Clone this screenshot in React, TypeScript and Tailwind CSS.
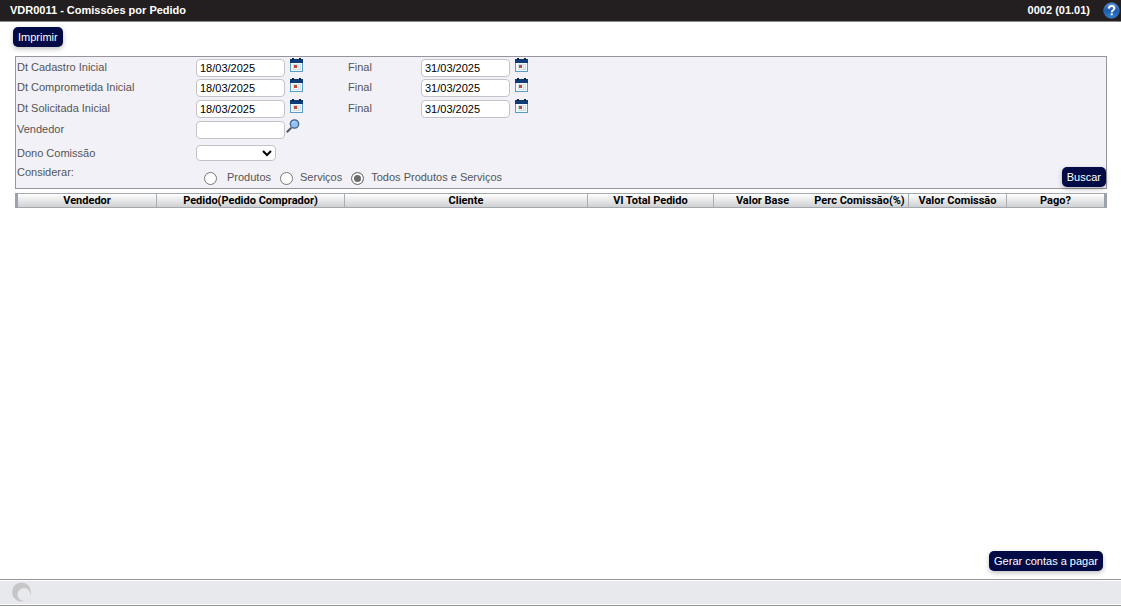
import { useState } from "react";

const dateRows = [
  { id: "cadastro", label: "Dt Cadastro Inicial" },
  { id: "comprometida", label: "Dt Comprometida Inicial" },
  { id: "solicitada", label: "Dt Solicitada Inicial" },
];

const columns = [
  { name: "Vendedor", width: "w-[139px]", divider: true },
  { name: "Pedido(Pedido Comprador)", width: "w-[188px]", divider: true },
  { name: "Cliente", width: "w-auto", divider: true },
  { name: "Vl Total Pedido", width: "w-[126px]", divider: true },
  { name: "Valor Base", width: "w-[97px]", divider: false },
  { name: "Perc Comissão(%)", width: "w-[98px]", divider: true },
  { name: "Valor Comissão", width: "w-[98px]", divider: true },
  { name: "Pago?", width: "w-[97px]", divider: false },
];

const options = ["Produtos", "Serviços", "Todos Produtos e Serviços"];

const field =
  "h-[18px] w-[89px] rounded border border-[#c4c4c8] bg-white px-[3px] text-[11px] text-black outline-none";
const action =
  "h-5 rounded-[5px] bg-[#020b45] px-[5px] text-[11px] leading-5 text-white whitespace-nowrap shadow-[0_2px_5px_rgba(0,0,0,0.25)]";

function CalendarIcon() {
  return (
    <svg width="13" height="14" viewBox="0 0 13 14" aria-hidden="true">
      <rect x="0.5" y="2.5" width="12" height="11" fill="#f4fafd" stroke="#5b9bc8" />
      <rect x="0" y="1" width="13" height="4" fill="#0d3c78" />
      <rect x="2" y="0" width="2" height="2" fill="#10243f" />
      <rect x="9" y="0" width="2" height="2" fill="#10243f" />
      <path d="M3 6.500h8M3 9h8M3 11.500h8M3.500 6v6M8.500 6v6M10.500 6v6" stroke="#cfe2ea" />
      <rect x="4" y="7" width="3" height="3" fill="#c64a3c" />
    </svg>
  );
}

function SearchIcon() {
  return (
    <svg width="14" height="14" viewBox="0 0 14 14" aria-hidden="true">
      <path d="M0.800 13.200L5.300 8.700" stroke="#555b63" strokeWidth="2" />
      <circle cx="8.500" cy="5" r="4.200" fill="#8fc1f3" stroke="#46618c" strokeWidth="1.300" />
      <path d="M6 4.500a2.700 2.700 0 0 1 3-2" fill="none" stroke="#c4e0fb" />
    </svg>
  );
}

function HelpIcon() {
  return (
    <svg width="17" height="17" viewBox="0 0 17 17" aria-hidden="true">
      <defs>
        <linearGradient id="help" x1="0" y1="0" x2="0" y2="1">
          <stop offset="0" stopColor="#5d94d6" />
          <stop offset="0.5" stopColor="#1e5cad" />
          <stop offset="1" stopColor="#2f7fd3" />
        </linearGradient>
      </defs>
      <circle cx="8.500" cy="8.500" r="7.700" fill="url(#help)" stroke="#3b6fb2" />
      <path d="M5.800 6.600C5.900 4.800 7 4 8.600 4c1.700 0 2.800 0.900 2.800 2.300 0 2-2.700 2.100-2.700 4" fill="none" stroke="#fff" strokeWidth="1.900" />
      <rect x="7.700" y="11.300" width="2" height="2" fill="#fff" />
    </svg>
  );
}

function DateField({ id, label, value }: { id: string; label: string; value: string }) {
  return (
    <div className="flex items-start gap-[5px]">
      <input id={id} aria-label={label} defaultValue={value} className={`${field} mt-[2px]`} />
      <button type="button" aria-label={`Calendário ${label}`} className="pt-px">
        <CalendarIcon />
      </button>
    </div>
  );
}

export default function App() {
  const [selected, setSelected] = useState(options[2]);

  return (
    <div className="flex min-h-screen flex-col bg-white font-['Liberation_Sans',Arial,sans-serif] text-[11px] leading-[13px] text-[#555]">
      <header className="flex h-[22px] items-center justify-between border-b border-[#8a8785] bg-[#231f20] pr-px pl-[10px] font-bold text-white">
        <h1>VDR0011 - Comissões por Pedido</h1>
        <div className="flex items-center gap-[13px]">
          <span>0002 (01.01)</span>
          <a href="#ajuda" aria-label="Ajuda">
            <HelpIcon />
          </a>
        </div>
      </header>

      <main className="flex flex-1 flex-col pr-[14px] pl-[15px]">
        <div className="-ml-[2px] flex h-[34px] items-start pt-[5px]">
          <button type="button" className={action}>Imprimir</button>
        </div>

        <form
          className="border border-[#96969a] bg-[#f2f1f7]"
          onSubmit={(event) => event.preventDefault()}
        >
          <div className="grid grid-cols-[180px_152px_73px_1fr] grid-rows-[20px_21px_21px_22px_23px_24px]">
            {dateRows.map((row) => (
              <div key={row.id} className="col-span-4 grid grid-cols-subgrid">
                <label htmlFor={`${row.id}-inicial`} className="pt-1 pl-px">{row.label}</label>
                <DateField id={`${row.id}-inicial`} label={row.label} value="18/03/2025" />
                <label htmlFor={`${row.id}-final`} className="pt-1">Final</label>
                <DateField id={`${row.id}-final`} label="Final" value="31/03/2025" />
              </div>
            ))}

            <label htmlFor="vendedor" className="pt-1 pl-px">Vendedor</label>
            <div className="col-span-3 flex items-start gap-px">
              <input id="vendedor" className={`${field} mt-[2px]`} />
              <button type="button" aria-label="Pesquisar vendedor">
                <SearchIcon />
              </button>
            </div>

            <label htmlFor="dono" className="pt-[6px] pl-px">Dono Comissão</label>
            <div className="relative col-span-3 mt-1 h-4 w-20">
              <select
                id="dono"
                className="block h-4 w-20 appearance-none rounded border border-[#c4c4c8] bg-white text-[11px] text-black"
              >
                <option value=""></option>
              </select>
              <svg
                className="pointer-events-none absolute top-[5px] right-1"
                width="10"
                height="7"
                viewBox="0 0 10 7"
                aria-hidden="true"
              >
                <path d="M1 1l4 4 4-4" fill="none" stroke="#000" strokeWidth="2" />
              </svg>
            </div>

            <span id="considerar" className="pt-[2px] pl-px">Considerar:</span>
            <div className="col-span-3 flex items-end justify-between">
              <div role="radiogroup" aria-labelledby="considerar" className="flex gap-[9px] pb-[3px] pl-2">
                {options.map((option) => (
                  <label key={option} className="flex gap-[7px] first:gap-[10px]">
                    <input
                      type="radio"
                      name="considerar"
                      checked={selected === option}
                      onChange={() => setSelected(option)}
                      className="mt-px size-[13px] appearance-none rounded-full border border-[#767676] bg-white checked:border-[#767676] checked:bg-[#6b6b6b] checked:shadow-[inset_0_0_0_2px_#fff]"
                    />
                    {option}
                  </label>
                ))}
              </div>
              <button type="submit" className={`${action} mb-px`}>Buscar</button>
            </div>
          </div>
        </form>

        <table className="mt-1 w-full table-fixed border-separate border-spacing-0 border-x-3 border-[#9ba2ab] font-['Roboto',sans-serif] text-[11px] leading-[13px] text-black">
          <thead>
            <tr>
              {columns.map((column) => (
                <th
                  key={column.name}
                  scope="col"
                  className={`${column.width} border-y border-y-[#a3a8ae] bg-linear-to-b from-white to-[#cfd0d2] p-0 text-center font-bold whitespace-nowrap ${column.divider ? "border-r border-r-[#a9adb2]" : ""}`}
                >
                  {column.name}
                </th>
              ))}
            </tr>
          </thead>
        </table>

        <div className="mt-auto flex justify-end pr-1 pb-2">
          <button type="button" className={action}>Gerar contas a pagar</button>
        </div>
      </main>

      <footer className="mb-px border-y border-[#939598]">
        <div className="my-px flex h-[23px] items-start bg-[#e8e9ed] pt-px pl-3">
          <svg width="20" height="20" viewBox="0 0 20 20" aria-hidden="true">
            <circle cx="9.500" cy="10" r="9.500" fill="#c6c6c8" />
            <circle cx="12" cy="12.500" r="6.500" fill="#e8e9ed" />
          </svg>
        </div>
      </footer>
    </div>
  );
}
